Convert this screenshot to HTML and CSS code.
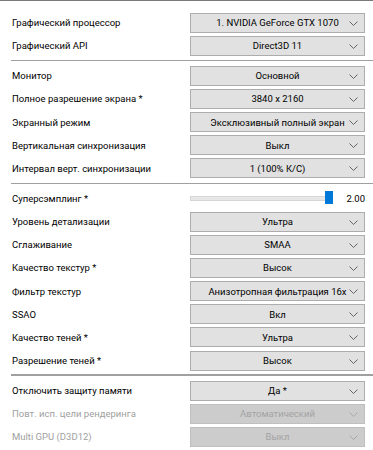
FILE: index.html
```html
<!DOCTYPE html>
<html lang="ru">
<head>
<meta charset="utf-8">
<title>Настройки графики</title>
<link rel="stylesheet" href="styles.css">
</head>
<body>
<div class="panel">
  <div class="group">
    <div class="row"><span class="label">Графический процессор</span><div class="select"><span class="value">1. NVIDIA GeForce GTX 1070</span><svg class="chev" viewBox="0 0 9 5" width="9" height="5"><polyline points="0.5,0.5 4.5,4.5 8.5,0.5"/></svg></div></div>
    <div class="row"><span class="label">Графический API</span><div class="select"><span class="value">Direct3D 11</span><svg class="chev" viewBox="0 0 9 5" width="9" height="5"><polyline points="0.5,0.5 4.5,4.5 8.5,0.5"/></svg></div></div>
  </div>
  <div class="sep"></div>
  <div class="group">
    <div class="row"><span class="label">Монитор</span><div class="select"><span class="value">Основной</span><svg class="chev" viewBox="0 0 9 5" width="9" height="5"><polyline points="0.5,0.5 4.5,4.5 8.5,0.5"/></svg></div></div>
    <div class="row"><span class="label">Полное разрешение экрана *</span><div class="select"><span class="value">3840 x 2160</span><svg class="chev" viewBox="0 0 9 5" width="9" height="5"><polyline points="0.5,0.5 4.5,4.5 8.5,0.5"/></svg></div></div>
    <div class="row"><span class="label">Экранный режим</span><div class="select"><span class="value">Эксклюзивный полный экран</span><svg class="chev" viewBox="0 0 9 5" width="9" height="5"><polyline points="0.5,0.5 4.5,4.5 8.5,0.5"/></svg></div></div>
    <div class="row"><span class="label">Вертикальная синхронизация</span><div class="select"><span class="value">Выкл</span><svg class="chev" viewBox="0 0 9 5" width="9" height="5"><polyline points="0.5,0.5 4.5,4.5 8.5,0.5"/></svg></div></div>
    <div class="row"><span class="label">Интервал верт. синхронизации</span><div class="select"><span class="value">1 (100% К/С)</span><svg class="chev" viewBox="0 0 9 5" width="9" height="5"><polyline points="0.5,0.5 4.5,4.5 8.5,0.5"/></svg></div></div>
  </div>
  <div class="sep"></div>
  <div class="group">
    <div class="row"><span class="label">Суперсэмплинг *</span><div class="slider"><div class="track"><div class="thumb"></div></div><span class="slider-value">2.00</span></div></div>
    <div class="row"><span class="label">Уровень детализации</span><div class="select"><span class="value">Ультра</span><svg class="chev" viewBox="0 0 9 5" width="9" height="5"><polyline points="0.5,0.5 4.5,4.5 8.5,0.5"/></svg></div></div>
    <div class="row"><span class="label">Сглаживание</span><div class="select"><span class="value">SMAA</span><svg class="chev" viewBox="0 0 9 5" width="9" height="5"><polyline points="0.5,0.5 4.5,4.5 8.5,0.5"/></svg></div></div>
    <div class="row"><span class="label">Качество текстур *</span><div class="select"><span class="value">Высок</span><svg class="chev" viewBox="0 0 9 5" width="9" height="5"><polyline points="0.5,0.5 4.5,4.5 8.5,0.5"/></svg></div></div>
    <div class="row"><span class="label">Фильтр текстур</span><div class="select"><span class="value">Анизотропная фильтрация 16x</span><svg class="chev" viewBox="0 0 9 5" width="9" height="5"><polyline points="0.5,0.5 4.5,4.5 8.5,0.5"/></svg></div></div>
    <div class="row"><span class="label">SSAO</span><div class="select"><span class="value">Вкл</span><svg class="chev" viewBox="0 0 9 5" width="9" height="5"><polyline points="0.5,0.5 4.5,4.5 8.5,0.5"/></svg></div></div>
    <div class="row"><span class="label">Качество теней *</span><div class="select"><span class="value">Ультра</span><svg class="chev" viewBox="0 0 9 5" width="9" height="5"><polyline points="0.5,0.5 4.5,4.5 8.5,0.5"/></svg></div></div>
    <div class="row"><span class="label">Разрешение теней *</span><div class="select"><span class="value">Высок</span><svg class="chev" viewBox="0 0 9 5" width="9" height="5"><polyline points="0.5,0.5 4.5,4.5 8.5,0.5"/></svg></div></div>
  </div>
  <div class="sep sep-thick"></div>
  <div class="group">
    <div class="row"><span class="label">Отключить защиту памяти</span><div class="select"><span class="value">Да *</span><svg class="chev" viewBox="0 0 9 5" width="9" height="5"><polyline points="0.5,0.5 4.5,4.5 8.5,0.5"/></svg></div></div>
    <div class="row disabled"><span class="label">Повт. исп. цели рендеринга</span><div class="select"><span class="value">Автоматический</span><svg class="chev" viewBox="0 0 9 5" width="9" height="5"><polyline points="0.5,0.5 4.5,4.5 8.5,0.5"/></svg></div></div>
    <div class="row disabled"><span class="label">Multi GPU (D3D12)</span><div class="select"><span class="value">Выкл</span><svg class="chev" viewBox="0 0 9 5" width="9" height="5"><polyline points="0.5,0.5 4.5,4.5 8.5,0.5"/></svg></div></div>
  </div>
</div>
</body>
</html>
```
FILE: styles.css
```css
html, body {
  margin: 0;
  padding: 0;
  background: #ffffff;
}
body {
  font-family: Roboto, "Noto Sans", sans-serif;
  font-size: 9.5px;
  color: #000000;
  width: 373px;
  height: 450px;
  overflow: hidden;
}
.panel {
  border-top: 1px solid #7a7a7a;
  padding-top: 10px;
  display: flex;
  flex-direction: column;
}
.group {
  display: flex;
  flex-direction: column;
}
.row {
  height: 23.15px;
  display: flex;
  align-items: center;
  padding-left: 12px;
  padding-right: 8px;
}
.label {
  flex: 1;
  white-space: nowrap;
}
.select {
  position: relative;
  width: 175px;
  height: 20px;
  box-sizing: border-box;
  background: #e1e1e1;
  border: 1px solid #adadad;
  display: flex;
  align-items: center;
  justify-content: center;
  overflow: hidden;
}
.value {
  white-space: nowrap;
}
.chev {
  position: absolute;
  right: 6px;
  top: 7px;
  fill: none;
  stroke: #666666;
  stroke-width: 1;
}
.disabled .label {
  color: #a0a0a0;
}
.disabled .select {
  background: #cccccc;
  border-color: #bfbfbf;
  color: #a3a3a3;
}
.disabled .chev {
  stroke: #a8a8a8;
}
.sep {
  height: 1px;
  background: #a0a0a0;
  margin: 3px 0 3px 11px;
}
.sep-thick {
  height: 2px;
  margin: 2px 0 3px 11px;
}
.slider {
  width: 175px;
  display: flex;
  align-items: center;
}
.track {
  position: relative;
  width: 134px;
  height: 3px;
  background: #e7e7e7;
  border: 1px solid #d6d6d6;
}
.thumb {
  position: absolute;
  right: -8px;
  top: -6px;
  width: 8px;
  height: 13px;
  background: #0078d7;
}
.slider-value {
  margin-left: auto;
}
```
